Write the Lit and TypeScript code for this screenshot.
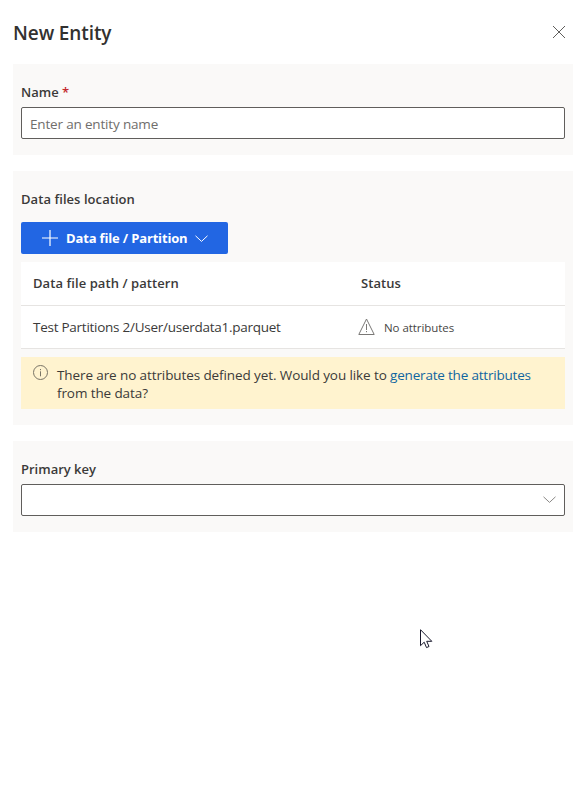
import { LitElement, html, css, svg } from "lit";
import { customElement } from "lit/decorators.js";

const chevron = svg`<path d="M.5 .8 6.500 6.400 12.500 .8" fill="none" stroke="currentColor"/>`;

@customElement("app-root")
export class AppRoot extends LitElement {
  static styles = css`
    :host { display: block; position: relative; height: 791px; box-sizing: border-box; background: #fff; color: #3b3a39; font-family: "Open Sans", "Noto Sans", sans-serif; font-size: 13.5px; line-height: 20px; overflow: hidden; }
    * { box-sizing: border-box; }
    svg { display: block; flex: none; }
    header { display: flex; justify-content: space-between; height: 64px; padding: 19px 19px 0 13px; }
    h1 { margin: 0; color: #323130; font-size: 19px; line-height: 28px; font-weight: 560; letter-spacing: -0.1px; white-space: nowrap; }
    .close { margin-top: 7px; color: #605e5c; }
    main { display: flex; flex-direction: column; gap: 16px; padding: 0 11px 0 13px; }
    section { background: #faf9f8; padding: 18px 8px 16px; }
    .label { height: 25px; font-weight: 550; font-size: 13px; letter-spacing: 0; white-space: nowrap; }
    .location { letter-spacing: 0.06px; }
    .req { color: #c4282d; }
    .field { display: flex; align-items: center; justify-content: space-between; height: 32px; border: 1px solid #605e5c; border-radius: 2px; background: #fff; padding: 2px 8px 0 8px; color: #706e6c; white-space: nowrap; }
    .field svg { color: #8a8886; margin-top: -3px; }
    .placeholder { letter-spacing: -0.17px; }
    .button { display: flex; align-items: center; width: 207px; height: 32px; margin-top: 8px; padding: 0 0 0 21px; border: 0; border-radius: 2px; background: #2266e3; color: #fff; font: 700 13px/20px "Open Sans", "Noto Sans", sans-serif; letter-spacing: -0.16px; white-space: nowrap; }
    .button span { width: 121px; margin: 0 8px; text-align: left; }
    .table { margin-top: 8px; background: #fff; }
    .row { display: grid; grid-template-columns: 328px 1fr; align-items: center; height: 44px; padding-left: 12px; border-bottom: 1px solid #e6e4e2; white-space: nowrap; }
    .row + .row { height: 43px; }
    .head { font-weight: 550; font-size: 13px; padding-bottom: 1px; letter-spacing: 0.07px; }
    .path { letter-spacing: -0.26px; }
    .status { display: flex; align-items: center; gap: 9px; margin-left: -3px; font-size: 11.5px; letter-spacing: -0.06px; color: #484644; }
    .status svg { margin-top: -1px; }
    .status span { padding-top: 1px; }
    .notice { display: flex; height: 52px; margin-top: 8px; padding: 8px 12px; background: #fff3cf; line-height: 18px; letter-spacing: -0.1px; }
    .notice p { margin: 1px 0 0 9px; white-space: nowrap; }
    a { color: #0f65a0; letter-spacing: -0.2px; }
    .cursor { position: absolute; left: 420px; top: 629px; }
  `;

  render() {
    return html`
      <header>
        <h1>New Entity</h1>
        <svg class="close" width="12" height="12" viewBox="0 0 12 12"><path d="M0 0 12 12M12 0 0 12" stroke="currentColor"/></svg>
      </header>
      <main>
        <section>
          <div class="label">Name <span class="req">*</span></div>
          <div class="field"><span class="placeholder">Enter an entity name</span></div>
        </section>
        <section>
          <div class="label location">Data files location</div>
          <button class="button">
            <svg width="16" height="16" viewBox="0 0 16 16"><path d="M8 0V16M0 8H16" stroke="currentColor" stroke-width="1.200"/></svg>
            <span>Data file / Partition</span>
            <svg width="13" height="7" viewBox="0 0 13 7">${chevron}</svg>
          </button>
          <div class="table">
            <div class="row head"><span>Data file path / pattern</span><span>Status</span></div>
            <div class="row"><span class="path">Test Partitions 2/User/userdata1.parquet</span>
              <div class="status">
                <svg width="17" height="17" viewBox="0 0 17 17" fill="none" stroke="#7a7876"><path d="M8.500 1 16.200 16.500H.8ZM8.500 6v6M8.500 13v1.200"/></svg>
                <span>No attributes</span>
              </div>
            </div>
          </div>
          <div class="notice">
            <svg width="15" height="15" viewBox="0 0 15 15" fill="none" stroke="#797466"><circle cx="7.500" cy="7.500" r="7"/><path d="M7.500 4v1.200M7.500 6.300v5"/></svg>
            <p>There are no attributes defined yet. Would you like to <a>generate the attributes</a><br>from the data?</p>
          </div>
        </section>
        <section>
          <div class="label">Primary key</div>
          <div class="field"><span></span><svg width="13" height="7" viewBox="0 0 13 7">${chevron}</svg></div>
        </section>
      </main>
      <svg class="cursor" width="13" height="20" viewBox="0 0 13 20"><path d="M.5 .7V16.700L4.200 13.200 6.500 18.600 9 17.500 6.700 12.300H11.800Z" fill="#fff" stroke="#18182c"/></svg>
    `;
  }
}
